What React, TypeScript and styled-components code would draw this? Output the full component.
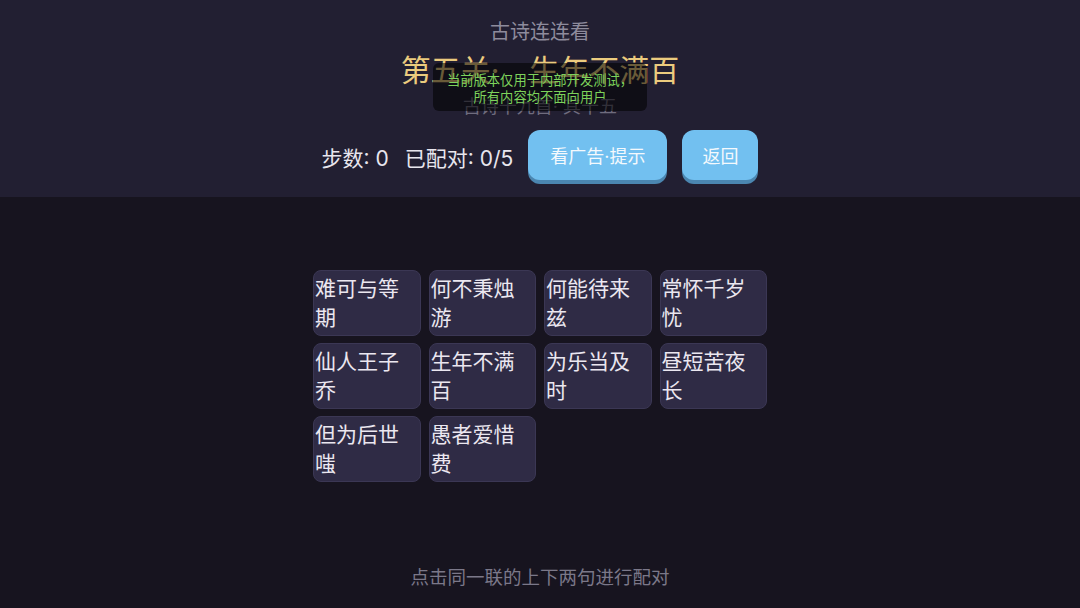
import React from "react";
import styled, { createGlobalStyle } from "styled-components";

const Global = createGlobalStyle`
  html, body { margin: 0; padding: 0; background: #17141f; }
  body { font-family: "Inter", "Noto Sans CJK SC", sans-serif; }
  #root { min-height: 100vh; }
`;

const Page = styled.div`
  min-height: 100vh;
  display: flex;
  flex-direction: column;
  background: #17141f;
  position: relative;
`;

const Header = styled.header`
  height: 197px;
  box-sizing: border-box;
  background: #221f32;
  display: flex;
  flex-direction: column;
  align-items: center;
  padding-top: 18px;
  position: relative;
`;

const AppName = styled.div`
  font-size: 20px;
  line-height: 28px;
  color: #8e8b9c;
`;

const Title = styled.h1`
  margin: 4px 0 0;
  font-size: 30px;
  line-height: 40px;
  font-weight: 400;
  color: #ebcb7e;
`;

const Subtitle = styled.div`
  margin-top: 5px;
  font-size: 18px;
  line-height: 24px;
  color: #6f6c7e;
`;

const StatsRow = styled.div`
  margin-top: 11px;
  display: flex;
  align-items: center;
  height: 54px;
`;

const Stats = styled.div`
  display: flex;
  gap: 16px;
  font-size: 21px;
  color: #e8e6ee;
  margin-right: 15px;
  white-space: pre;
`;

const Button = styled.button<{ $wide?: boolean }>`
  font-family: inherit;
  height: 50px;
  margin-bottom: 4px;
  padding: 0 ${(p) => (p.$wide ? "22px" : "20px")};
  margin-right: ${(p) => (p.$wide ? "15px" : "0")};
  border: none;
  border-radius: 12px;
  background: #72c0f0;
  box-shadow: 0 4px 0 #4b86b0;
  color: #f4f9fd;
  font-size: 18px;
  cursor: pointer;
`;

const Toast = styled.div`
  position: absolute;
  top: 63px;
  left: 50%;
  transform: translateX(-50%);
  width: 214px;
  height: 48px;
  box-sizing: border-box;
  border-radius: 6px;
  background: rgba(0, 0, 0, 0.55);
  color: #7dd25b;
  font-size: 13.3px;
  line-height: 17px;
  text-align: center;
  padding-top: 9px;
  white-space: nowrap;
`;

const Main = styled.main`
  flex: 1;
  display: flex;
  align-items: center;
  justify-content: center;
`;

const Grid = styled.div`
  display: grid;
  grid-template-columns: repeat(4, 107.5px);
  grid-auto-rows: 66px;
  column-gap: 8px;
  row-gap: 7px;
`;

const Card = styled.div`
  box-sizing: border-box;
  background: #2f2b45;
  border: 1.5px solid #3b3754;
  border-radius: 8px;
  padding: 3px 2px 0 1px;
  font-size: 21px;
  line-height: 29px;
  color: #ebe7f0;
  overflow: hidden;
`;

const Footer = styled.footer`
  padding: 10px 0 18px;
  text-align: center;
  font-size: 18.5px;
  line-height: 26px;
  color: #7b7889;
`;

const lines = [
  "难可与等期",
  "何不秉烛游",
  "何能待来兹",
  "常怀千岁忧",
  "仙人王子乔",
  "生年不满百",
  "为乐当及时",
  "昼短苦夜长",
  "但为后世嗤",
  "愚者爱惜费",
];

export default function App() {
  return (
    <Page>
      <Global />
      <Header>
        <AppName>古诗连连看</AppName>
        <Title>第五关·　生年不满百</Title>
        <Subtitle>古诗十九首· 其十五</Subtitle>
        <StatsRow>
          <Stats>
            <span>步数: 0</span>
            <span>已配对: 0/5</span>
          </Stats>
          <Button $wide>看广告·提示</Button>
          <Button>返回</Button>
        </StatsRow>
        <Toast>
          当前版本仅用于内部开发测试，
          <br />
          所有内容均不面向用户
        </Toast>
      </Header>
      <Main>
        <Grid>
          {lines.map((t) => (
            <Card key={t}>{t}</Card>
          ))}
        </Grid>
      </Main>
      <Footer>点击同一联的上下两句进行配对</Footer>
    </Page>
  );
}
